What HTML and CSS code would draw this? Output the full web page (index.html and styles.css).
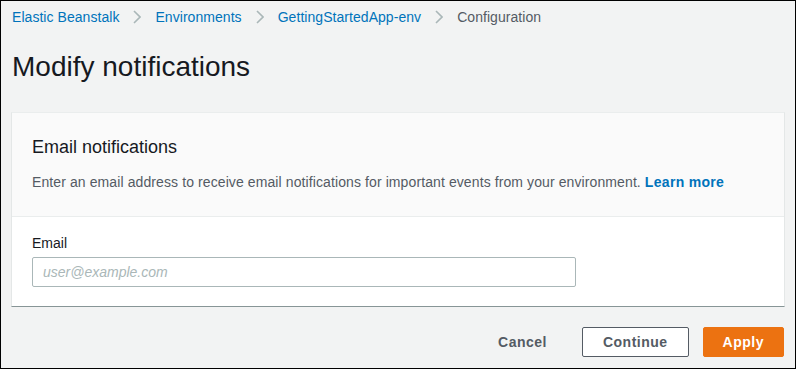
FILE: index.html
```html
<!DOCTYPE html>
<html lang="en">
<head>
<meta charset="utf-8">
<title>Modify notifications</title>
<link rel="stylesheet" href="styles.css">
</head>
<body>
<div class="frame">
  <nav class="crumbs">
    <a class="crumb-link" href="#">Elastic Beanstalk</a>
    <svg class="chev" width="8" height="14" viewBox="0 0 8 14"><polyline points="1,1 7,7 1,13" fill="none" stroke="#aab7b8" stroke-width="1.6"/></svg>
    <a class="crumb-link" href="#">Environments</a>
    <svg class="chev" width="8" height="14" viewBox="0 0 8 14"><polyline points="1,1 7,7 1,13" fill="none" stroke="#aab7b8" stroke-width="1.6"/></svg>
    <a class="crumb-link" href="#">GettingStartedApp-env</a>
    <svg class="chev" width="8" height="14" viewBox="0 0 8 14"><polyline points="1,1 7,7 1,13" fill="none" stroke="#aab7b8" stroke-width="1.6"/></svg>
    <span class="crumb-current">Configuration</span>
  </nav>
  <h1 class="page-title">Modify notifications</h1>
  <section class="card">
    <div class="card-header">
      <h2 class="card-title">Email notifications</h2>
      <p class="card-desc">Enter an email address to receive email notifications for important events from your environment. <a class="learn" href="#">Learn more</a></p>
    </div>
    <div class="card-body">
      <label class="field-label" for="email">Email</label>
      <input class="field-input" id="email" type="text" placeholder="user@example.com">
    </div>
  </section>
  <div class="actions">
    <button class="btn btn-link">Cancel</button>
    <button class="btn btn-normal">Continue</button>
    <button class="btn btn-primary">Apply</button>
  </div>
</div>
</body>
</html>
```
FILE: styles.css
```css
html, body {
  margin: 0;
  padding: 0;
}
body {
  font-family: "Liberation Sans", Arial, sans-serif;
  background: #f2f3f3;
}
.frame {
  box-sizing: border-box;
  width: 796px;
  height: 369px;
  border: 1px solid #000;
  background: #f2f3f3;
  padding: 6px 10px 0 10px;
}
.crumbs {
  display: flex;
  align-items: center;
  gap: 14px;
  font-size: 14px;
  line-height: 20px;
  padding-left: 1px;
  letter-spacing: 0.05px;
}
.crumb-link {
  color: #0073bb;
  text-decoration: none;
}
.crumb-current {
  color: #545b64;
}
.chev {
  display: block;
}
.page-title {
  margin: 22px 0 0 1px;
  font-size: 28px;
  line-height: 36px;
  font-weight: 400;
  color: #16191f;
}
.card {
  margin-top: 27px;
  border: 1px solid #e4e7e7;
  border-top-color: #eaeded;
  border-bottom: 1px solid #879596;
  background: #fff;
}
.card-header {
  background: #fafafa;
  padding: 23px 20px 24px;
  border-bottom: 1px solid #eaeded;
}
.card-title {
  margin: 0;
  font-size: 18px;
  line-height: 22px;
  font-weight: 400;
  color: #16191f;
}
.card-desc {
  margin: 14px 0 0;
  font-size: 14px;
  line-height: 20px;
  color: #545b64;
  letter-spacing: 0.1px;
}
.learn {
  color: #0073bb;
  font-weight: 700;
  letter-spacing: 0.3px;
  text-decoration: none;
}
.card-body {
  padding: 16px 20px 19px;
  display: flex;
  flex-direction: column;
  align-items: flex-start;
}
.field-label {
  font-size: 14px;
  line-height: 20px;
  color: #16191f;
  margin-bottom: 4px;
}
.field-input {
  box-sizing: border-box;
  width: 544px;
  height: 30px;
  margin: 0;
  border: 1px solid #aab7b8;
  border-radius: 2px;
  padding: 0 10px;
  font-family: "Liberation Sans", Arial, sans-serif;
  font-size: 14px;
  color: #16191f;
  background: #fff;
}
.field-input::placeholder {
  color: #aab7b8;
  font-style: italic;
}
.actions {
  display: flex;
  justify-content: flex-end;
  gap: 14px;
  margin-top: 20px;
  padding-right: 1px;
}
.btn {
  box-sizing: border-box;
  height: 30px;
  padding: 0 20px;
  border: 1px solid transparent;
  border-radius: 2px;
  font-family: "Liberation Sans", Arial, sans-serif;
  font-size: 14px;
  font-weight: 700;
  letter-spacing: 0.5px;
  line-height: 28px;
  cursor: pointer;
}
.btn-link {
  background: transparent;
  color: #545b64;
}
.btn-normal {
  background: #fff;
  color: #545b64;
  border-color: #545b64;
}
.btn-primary {
  background: #ec7211;
  border-color: #ec7211;
  color: #fff;
  padding: 0 19px;
}
```
